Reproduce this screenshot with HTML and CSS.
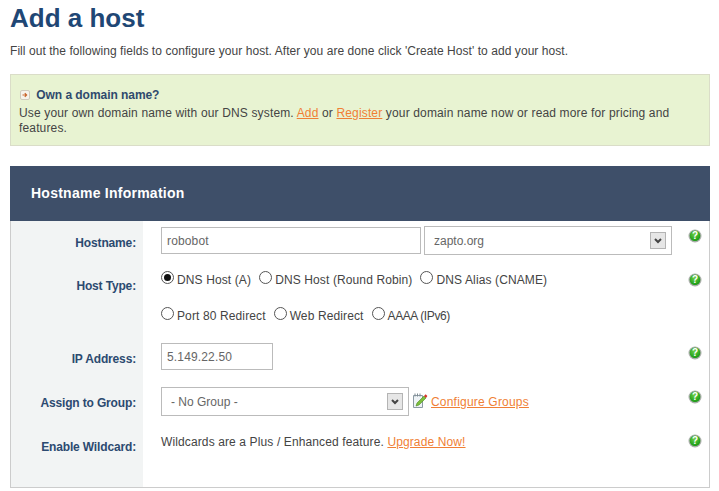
FILE: index.html
```html
<html>
<head>
<meta http-equiv="Content-Type" content="text/html; charset=utf-8" />
<title>Add a host</title>
<link rel="stylesheet" href="styles.css">
</head>
<body>
<svg class="defs" width="0" height="0">
    <defs>
        <radialGradient id="helpGreen" cx="45%" cy="35%" r="65%">
            <stop offset="0" stop-color="#6fd04a" />
            <stop offset="1" stop-color="#169a12" />
        </radialGradient>
        <symbol id="help" viewBox="0 0 14 14">
            <circle cx="7" cy="7" r="6.5" fill="#a9aea9" />
            <circle cx="7" cy="6.7" r="5.3" fill="url(#helpGreen)" />
            <text x="7" y="10.3" text-anchor="middle" class="helpMark">?</text>
        </symbol>
        <symbol id="arrow" viewBox="0 0 16 17">
            <rect x="0.5" y="0.5" width="15" height="16" fill="#e6e6e6" stroke="#b4b4b4" />
            <path d="M5 7l3 3 3-3" fill="none" stroke="#444" stroke-width="2" />
        </symbol>
    </defs>
</svg>
<div class="wrapper">
    <h1 class="pageTitle">Add a host</h1>
    <p class="intro">Fill out the following fields to configure your host. After you are done click 'Create Host' to add your host.</p>

    <div class="notice">
        <div class="noticeTitle">
            <svg class="noticeIcon" width="10" height="10" viewBox="0 0 10 10">
                <rect x="0.5" y="0.5" width="9" height="9" rx="1.5" fill="#f6f3ec" stroke="#cfcabd" />
                <path d="M2.5 5h4M4.8 3.2l1.8 1.8-1.8 1.8" fill="none" stroke="#c8622a" stroke-width="1.2" />
            </svg>
            Own a domain name?
        </div>
        <p class="noticeText">Use your own domain name with our DNS system. <a href="#">Add</a> or <a href="#">Register</a> your domain name now or read more for pricing and features.</p>
    </div>

    <form class="panel" name="host" method="post">
        <div class="panelHead">Hostname Information</div>

        <div class="row rowHostname">
            <label class="rowLabel" for="hostname">Hostname:</label>
            <div class="rowField">
                <input type="text" id="hostname" class="textInput hostInput" value="robobot" />
                <div class="selectBox domainBox">
                    <select class="selectInput"><option>zapto.org</option></select>
                    <svg class="selectArrow"><use href="#arrow" /></svg>
                </div>
            </div>
            <div class="rowHelp"><svg class="helpIcon"><use href="#help" /></svg></div>
        </div>

        <div class="row rowType">
            <div class="rowLabel">Host Type:</div>
            <div class="rowField radioField">
                <div class="radioLine">
                    <label class="radio"><input type="radio" name="type" checked="checked" />DNS Host (A)</label>
                    <label class="radio"><input type="radio" name="type" />DNS Host (Round Robin)</label>
                    <label class="radio"><input type="radio" name="type" />DNS Alias (CNAME)</label>
                </div>
                <div class="radioLine">
                    <label class="radio"><input type="radio" name="type" />Port 80 Redirect</label>
                    <label class="radio"><input type="radio" name="type" />Web Redirect</label>
                    <label class="radio radioTight"><input type="radio" name="type" />AAAA (IPv6)</label>
                </div>
            </div>
            <div class="rowHelp"><svg class="helpIcon"><use href="#help" /></svg></div>
        </div>

        <div class="row rowIp">
            <label class="rowLabel" for="ip">IP Address:</label>
            <div class="rowField">
                <input type="text" id="ip" class="textInput ipInput" value="5.149.22.50" />
            </div>
            <div class="rowHelp"><svg class="helpIcon"><use href="#help" /></svg></div>
        </div>

        <div class="row rowGroup">
            <div class="rowLabel">Assign to Group:</div>
            <div class="rowField">
                <div class="selectBox groupBox">
                    <select class="selectInput"><option>- No Group -</option></select>
                    <svg class="selectArrow"><use href="#arrow" /></svg>
                </div>
                <svg class="editIcon" width="16" height="17" viewBox="0 0 16 17">
                    <path d="M1.5 3.5h9v12h-9z" fill="#eef3f6" stroke="#8b9aa3" />
                    <path d="M3 1.5v3M5.5 1.5v3M8 1.5v3" stroke="#7d8a92" />
                    <path d="M5 11l7-7 2 2-7 7-3 1z" fill="#7cbf3c" stroke="#4f8a25" stroke-width=".6" />
                    <path d="M12 4l1.6-1.8 1.8 1.8L14 6z" fill="#d8352a" />
                </svg>
                <a class="groupLink" href="#">Configure Groups</a>
            </div>
            <div class="rowHelp"><svg class="helpIcon"><use href="#help" /></svg></div>
        </div>

        <div class="row rowWildcard">
            <div class="rowLabel">Enable Wildcard:</div>
            <div class="rowField">Wildcards are a Plus / Enhanced feature. <a href="#">Upgrade Now!</a></div>
            <div class="rowHelp"><svg class="helpIcon"><use href="#help" /></svg></div>
        </div>
    </form>
</div>
</body>
</html>
```

FILE: styles.css
```css
html {
    background-color: #FFF;
}
body {
    margin: 0;
    color: #444;
    font: 12px/15px 'Liberation Sans', Arial, sans-serif;
}
a {
    color: #F07F35;
}
.defs {
    display: block;
    height: 0;
}
.wrapper {
    padding: 0 9px 0 10px;
}
.pageTitle {
    color: #1F4775;
    font-size: 26px;
    line-height: 32px;
    margin: 2px 0 0;
}
.intro {
    margin: 10px 0 15px;
    letter-spacing: .06px;
}
.notice {
    background-color: #E8F3D2;
    border: 1px solid #DADDC8;
    box-sizing: border-box;
    height: 72px;
    letter-spacing: .15px;
    padding: 13px 30px 0 8px;
}
.noticeTitle {
    color: #2F4A6D;
    font-weight: bold;
    letter-spacing: -.05px;
    margin-bottom: 3px;
    padding-left: 1px;
}
.noticeIcon {
    margin-right: 3px;
    vertical-align: -1px;
}
.noticeText {
    margin: 0;
}
.panel {
    border: 1px solid #CCC;
    border-top: 0;
    display: block;
    letter-spacing: .12px;
    margin: 20px 0 0;
}
.panelHead {
    background-color: #3E4F69;
    color: #FFF;
    font-size: 14px;
    font-weight: bold;
    height: 55px;
    letter-spacing: .25px;
    line-height: 55px;
    margin: 0 -1px;
    padding-left: 21px;
}
.row {
    display: grid;
    grid-template-columns: 132px 1fr 21px;
}
.rowLabel {
    background-color: #F2F4F4;
    color: #2C4A70;
    font-weight: bold;
    letter-spacing: -.15px;
    padding-right: 7px;
    text-align: right;
}
.rowField {
    align-items: flex-start;
    display: flex;
    padding-left: 18px;
}
.rowHostname { height: 40px; }
.rowHostname .rowLabel { padding-top: 15px; }
.rowHostname .rowField { padding-top: 6px; }
.rowHostname .rowHelp { padding-top: 8px; }
.rowType { height: 72px; }
.rowType .rowLabel { padding-top: 18px; }
.rowType .rowHelp { padding-top: 12px; }
.rowIp { height: 46px; }
.rowIp .rowLabel { padding-top: 19px; }
.rowIp .rowField { padding-top: 10px; }
.rowIp .rowHelp { padding-top: 13px; }
.rowGroup { height: 44px; }
.rowGroup .rowLabel { padding-top: 17px; }
.rowGroup .rowField { padding-top: 8px; }
.rowGroup .rowHelp { padding-top: 11px; }
.rowWildcard { height: 64px; }
.rowWildcard .rowLabel { padding-top: 17px; }
.rowWildcard .rowField { display: block; padding-top: 12px; }
.rowWildcard .rowHelp { padding-top: 11px; }
.helpIcon {
    display: block;
    height: 14px;
    width: 14px;
}
.helpMark {
    fill: #FFF;
    font: bold 10px 'Liberation Sans', Arial, sans-serif;
}
.textInput {
    border: 1px solid #BBB;
    box-sizing: border-box;
    color: #666;
    font: 12px 'Liberation Sans', Arial, sans-serif;
    height: 27px;
    letter-spacing: .15px;
    margin: 0;
    padding: 0 5px;
}
.hostInput {
    width: 260px;
}
.ipInput {
    width: 112px;
}
.selectBox {
    position: relative;
}
.domainBox {
    margin: -1px 0 0 3px;
    width: 248px;
}
.groupBox {
    width: 248px;
}
.selectInput {
    appearance: none;
    background-color: #FFF;
    border: 1px solid #BBB;
    border-radius: 0;
    box-sizing: border-box;
    color: #666;
    display: block;
    font: 12px 'Liberation Sans', Arial, sans-serif;
    height: 29px;
    letter-spacing: 0;
    padding: 0 9px;
    width: 100%;
}
.selectArrow {
    height: 17px;
    pointer-events: none;
    position: absolute;
    right: 6px;
    top: 6px;
    width: 16px;
}
.editIcon {
    margin: 5px 3px 0 3px;
}
.groupLink {
    letter-spacing: .2px;
    margin-top: 8px;
}
.radioField {
    display: block;
    padding-top: 1px;
}
.radioLine {
    align-items: center;
    display: flex;
    gap: 0 8px;
    height: 36px;
    letter-spacing: .12px;
}
.radio {
    align-items: center;
    display: flex;
}
.radioTight {
    letter-spacing: -.4px;
}
.radio input {
    appearance: none;
    background-color: #FFF;
    border: 1px solid #555;
    border-radius: 50%;
    box-sizing: border-box;
    height: 13px;
    margin: -5px 3px 0 0;
    position: relative;
    width: 13px;
}
.radio input:checked::after {
    background-color: #111;
    border-radius: 50%;
    content: "";
    height: 7px;
    left: 2px;
    position: absolute;
    top: 2px;
    width: 7px;
}
```
